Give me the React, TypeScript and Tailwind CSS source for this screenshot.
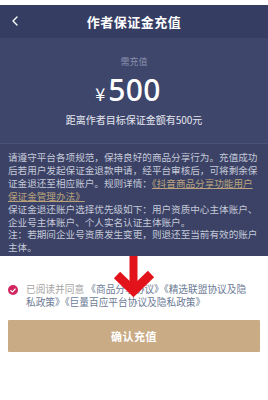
import { ChevronLeft } from 'lucide-react';

const FONT = { fontFamily: '"Noto Sans CJK SC", "Noto Sans", sans-serif' };

export default function App() {
  return (
    <div className="relative w-[268px] h-[400px] bg-white overflow-hidden" style={FONT}>
      <div className="h-[5px] bg-white" />

      {/* 顶部导航 */}
      <div className="relative h-[33px] bg-[#363d62] flex items-center justify-center">
        <ChevronLeft className="absolute left-[7px] top-[7px] w-[16px] h-[18px] text-white" strokeWidth={2} />
        <span className="text-white text-[13px] font-bold tracking-[0.5px] mt-[1px]">作者保证金充值</span>
      </div>

      {/* 金额 */}
      <div className="bg-[#3e466b] h-[105px] flex flex-col items-center pt-[17px]">
        <p className="text-[9px] leading-[14px] text-[#8a90ad]">需充值</p>
        <div className="flex items-end mt-[6px] text-white leading-none -ml-[12px]">
          <span className="text-[18px] mb-[3px] mr-[3px]">¥</span>
          <span className="text-[30px] font-medium tracking-[0.3px]" style={{ fontFamily: '"Noto Sans", sans-serif' }}>500</span>
        </div>
        <p className="text-[10px] leading-[14px] text-[#e6e8f0] mt-[8px]">距离作者目标保证金额有500元</p>
      </div>

      {/* 说明 */}
      <div className="bg-[#3b4266] border-t border-[#4a5277] px-[8px] pt-[7px] pb-[2px] text-[9.6px] leading-[12.9px] text-[#c5c9d8]">
        <p>
          请遵守平台各项规范，保持良好的商品分享行为。充值成功后若用户发起保证金退款申请，经平台审核后，可将剩余保证金退还至相应账户。规则详情：
          <span className="text-[#b9a27c] underline">《抖音商品分享功能用户保证金管理办法》</span>
        </p>
        <p>保证金退还账户选择优先级如下：用户资质中心主体账户、企业号主体账户、个人实名认证主体账户。</p>
        <p>注：若期间企业号资质发生变更，则退还至当前有效的账户主体。</p>
      </div>

      {/* 协议 */}
      <div className="flex items-start px-[8px] pt-[27px]">
        <div className="w-[10px] h-[10px] mt-[2px] rounded-full bg-[#d1255e] flex items-center justify-center shrink-0">
          <svg width="6" height="5" viewBox="0 0 6 5" fill="none">
            <path d="M0.8 2.5 L2.4 4 L5.2 1" stroke="white" strokeWidth="1.1" strokeLinecap="round" strokeLinejoin="round" />
          </svg>
        </div>
        <p className="ml-[8px] text-[9.7px] leading-[13px] text-[#a3a3a3] whitespace-nowrap">
          已阅读并同意{' '}
          <span className="text-[#6c7a95]">《商品分享协议》《精选联盟协议及隐</span>
          <br />
          <span className="text-[#6c7a95]">私政策》《巨量百应平台协议及隐私政策》</span>
        </p>
      </div>

      {/* 按钮 */}
      <div className="px-[8px] pt-[11px]">
        <div className="h-[32px] bg-[#c9ab86] flex items-center justify-center rounded-[1px]">
          <span className="text-white text-[11px] font-bold tracking-[0.5px]">确认充值</span>
        </div>
      </div>

      {/* 红色箭头标注 */}
      <svg className="absolute left-[113px] top-[256px]" width="44" height="46" viewBox="0 0 44 46">
        <rect x="16.5" y="0" width="8" height="30" fill="#e3131b" />
        <path d="M4 19 L20.5 35 L38 18" stroke="#e3131b" strokeWidth="9" fill="none" strokeLinejoin="miter" />
      </svg>
    </div>
  );
}
